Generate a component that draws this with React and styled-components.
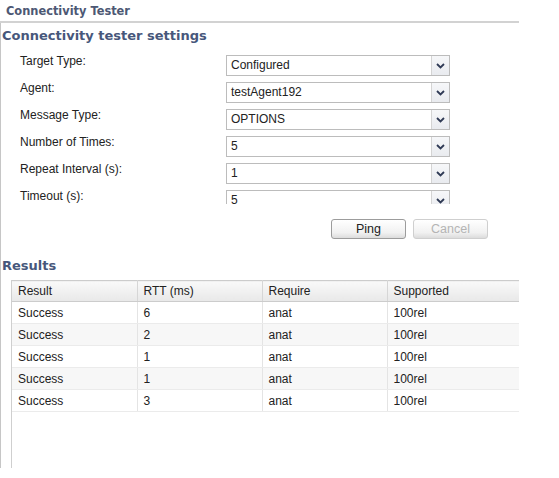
import styled, { createGlobalStyle } from "styled-components";

const Global = createGlobalStyle`
  body {
    margin: 0;
    background: #ffffff;
    font-family: "Liberation Sans", Arial, sans-serif;
    font-size: 12px;
    color: #222;
  }
`;

const settings = [
  { label: "Target Type:", value: "Configured" },
  { label: "Agent:", value: "testAgent192" },
  { label: "Message Type:", value: "OPTIONS" },
  { label: "Number of Times:", value: "5" },
  { label: "Repeat Interval (s):", value: "1" },
  { label: "Timeout (s):", value: "5" },
];

const results = [
  ["Success", "6", "anat", "100rel"],
  ["Success", "2", "anat", "100rel"],
  ["Success", "1", "anat", "100rel"],
  ["Success", "1", "anat", "100rel"],
  ["Success", "3", "anat", "100rel"],
];

const columns = ["Result", "RTT (ms)", "Require", "Supported"];

function Chevron() {
  return (
    <svg width="9" height="6" viewBox="0 0 9 6">
      <path d="M1 1 L4.5 4.5 L8 1" fill="none" stroke="#2f3a55" strokeWidth="1.8" />
    </svg>
  );
}

export default function App() {
  return (
    <Page>
      <Global />
      <TitleBar>Connectivity Tester</TitleBar>
      <Body>
        <SectionTitle top={4} height={27}>
          Connectivity tester settings
        </SectionTitle>
        <Form>
          {settings.map((s) => (
            <Row key={s.label}>
              <Label>{s.label}</Label>
              <Select>
                <SelectText>{s.value}</SelectText>
                <ArrowBox>
                  <Chevron />
                </ArrowBox>
              </Select>
            </Row>
          ))}
        </Form>
        <ButtonBar>
          <Button>Ping</Button>
          <Button disabled>Cancel</Button>
        </ButtonBar>
        <SectionTitle top={18} height={41}>
          Results
        </SectionTitle>
        <TableWrap>
          <Table>
            <thead>
              <tr>
                {columns.map((c, i) => (
                  <Th key={c} last={i === 3}>
                    {c}
                  </Th>
                ))}
              </tr>
            </thead>
            <tbody>
              {results.map((r, i) => (
                <Tr key={i} striped={i % 2 === 1}>
                  {r.map((v, j) => (
                    <Td key={j} last={j === 3}>
                      {v}
                    </Td>
                  ))}
                </Tr>
              ))}
            </tbody>
          </Table>
        </TableWrap>
      </Body>
    </Page>
  );
}

const Page = styled.div`
  width: 519px;
  display: flex;
  flex-direction: column;
`;

const TitleBar = styled.div`
  height: 21px;
  line-height: 23px;
  padding-left: 6px;
  border-bottom: 2px solid #d2d2d2;
  font-family: "DejaVu Sans", sans-serif;
  font-weight: bold;
  font-size: 11.4px;
  color: #4d5874;
`;

const Body = styled.div`
  height: 445px;
  border-left: 1px solid #c6c6c6;
  display: flex;
  flex-direction: column;
`;

const SectionTitle = styled.div`
  box-sizing: border-box;
  height: ${(p) => p.height}px;
  padding-top: ${(p) => p.top}px;
  padding-left: 1px;
  line-height: 18px;
  font-family: "DejaVu Sans", sans-serif;
  font-weight: bold;
  font-size: 13px;
  color: #47577b;
`;

const Form = styled.div`
  height: 154px;
  overflow: hidden;
`;

const Row = styled.div`
  height: 27px;
  display: grid;
  grid-template-columns: 225px 224px;
  align-items: start;
`;

const Label = styled.div`
  padding-left: 19px;
  padding-top: 4px;
  line-height: 14px;
  color: #222;
`;

const Select = styled.div`
  margin-top: 5px;
  height: 21px;
  box-sizing: border-box;
  border: 1px solid #bcbcbc;
  background: #ffffff;
  display: flex;
  align-items: stretch;
`;

const SelectText = styled.div`
  flex: 1;
  padding-left: 4px;
  line-height: 19px;
  color: #222;
`;

const ArrowBox = styled.div`
  width: 17px;
  border-left: 1px solid #d4d4d4;
  background: linear-gradient(#f6f7f9, #e9ebef);
  display: flex;
  align-items: center;
  justify-content: center;
`;

const ButtonBar = styled.div`
  display: flex;
  justify-content: flex-end;
  gap: 7px;
  padding-right: 31px;
  margin-top: 15px;
`;

const Button = styled.button`
  width: 75px;
  height: 20px;
  padding: 0;
  border: 1px solid ${(p) => (p.disabled ? "#cfcfcf" : "#9c9c9c")};
  border-radius: 3px;
  background: linear-gradient(#ffffff 0%, #f1f1f1 70%, #dcdcdc 100%);
  font-family: "Liberation Sans", Arial, sans-serif;
  font-size: 12.5px;
  color: ${(p) => (p.disabled ? "#b4b4b4" : "#222")};
`;

const TableWrap = styled.div`
  flex: 1;
  margin-left: 10px;
  border-left: 1px solid #cfcfcf;
`;

const Table = styled.table`
  width: 507px;
  border-collapse: collapse;
  table-layout: fixed;
`;

const Th = styled.th`
  width: ${(p) => (p.last ? "132px" : "125px")};
  height: 21px;
  box-sizing: border-box;
  padding: 0 0 0 6px;
  text-align: left;
  font-weight: normal;
  color: #222;
  background: linear-gradient(#f9f9f9, #e8e8e8);
  border-top: 1px solid #cccccc;
  border-bottom: 1px solid #cccccc;
  border-right: ${(p) => (p.last ? "none" : "1px solid #d6d6d6")};
`;

const Tr = styled.tr`
  background: ${(p) => (p.striped ? "#f7f7f7" : "#ffffff")};
`;

const Td = styled.td`
  height: 22px;
  box-sizing: border-box;
  padding: 0 0 0 6px;
  border-bottom: 1px solid #ebebeb;
  border-right: ${(p) => (p.last ? "none" : "1px solid #e4e4e4")};
  color: #222;
`;
